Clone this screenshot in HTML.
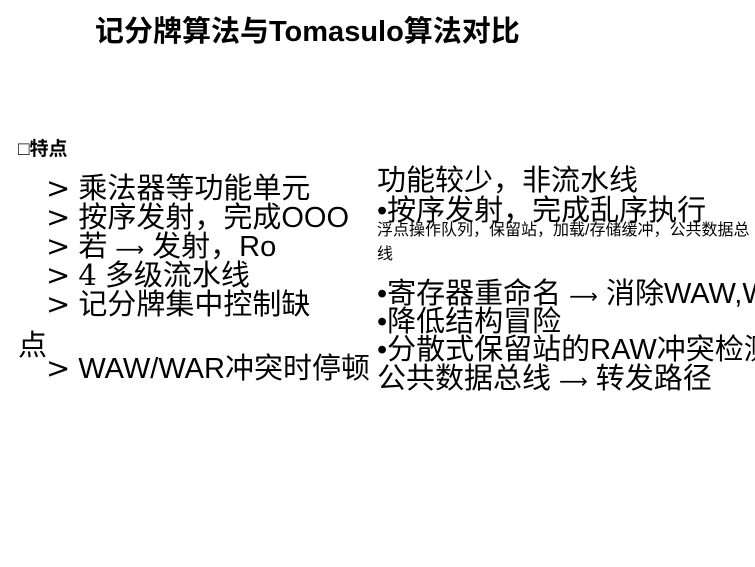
<!DOCTYPE html>
<html><head><meta charset="utf-8"><style>
body{margin:0;width:755px;height:567px;background:#fff;overflow:hidden;position:relative;font-family:"Liberation Sans","Noto Sans CJK SC",sans-serif;color:#000}
.t{position:absolute;white-space:nowrap;line-height:1}
.b{font-size:29px}
.s{font-size:16px}
.g{font-family:"DejaVu Serif",serif;font-weight:normal}
.a{font-family:"DejaVu Sans",sans-serif;font-size:20px}
</style></head><body>
<div class="t" style="left:95px;top:18px;font-size:29px;font-weight:bold">记分牌算法与Tomasulo算法对比</div>
<div class="t" style="left:18px;top:140px;font-size:19px;font-weight:bold">□特点</div>
<div class="t b" style="left:46px;top:174px"><span class="g">&gt;</span> 乘法器等功能单元</div>
<div class="t b" style="left:46px;top:203px"><span class="g">&gt;</span> 按序发射，完成OOO</div>
<div class="t b" style="left:46px;top:232px"><span class="g">&gt;</span> 若 <span class="a">⟶</span> 发射，Ro</div>
<div class="t b" style="left:46px;top:261px"><span class="g">&gt;</span> <span class="g">4</span> 多级流水线</div>
<div class="t b" style="left:46px;top:290px"><span class="g">&gt;</span> 记分牌集中控制缺</div>
<div class="t b" style="left:18px;top:332px">点</div>
<div class="t b" style="left:46px;top:354px"><span class="g">&gt;</span> WAW/WAR冲突时停顿</div>
<div class="t b" style="left:377px;top:167px">功能较少，非流水线</div>
<div class="t b" style="left:377px;top:197px">•按序发射，完成乱序执行</div>
<div class="t s" style="left:377px;top:223px">浮点操作队列，保留站，加载/存储缓冲，公共数据总</div>
<div class="t s" style="left:377px;top:247px">线</div>
<div class="t b" style="left:377px;top:280px">•寄存器重命名 <span class="a">⟶</span> 消除WAW,WAR</div>
<div class="t b" style="left:377px;top:308px">•降低结构冒险</div>
<div class="t b" style="left:377px;top:336px">•分散式保留站的RAW冲突检测</div>
<div class="t b" style="left:377px;top:365px">公共数据总线 <span class="a">⟶</span> 转发路径</div>
</body></html>
